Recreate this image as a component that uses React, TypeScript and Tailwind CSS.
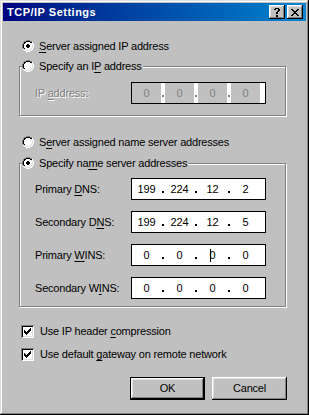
import React from "react";

const FONT = "font-['Liberation_Sans',Arial,sans-serif]";

type PixProps = { map: string[]; palette: Record<string, string> };

// tiny pixel-art icon renderer for the classic 3D glyphs
function Pix({ map, palette }: PixProps) {
  const w = map[0].length;
  const h = map.length;
  return (
    <svg width={w} height={h} viewBox={`0 0 ${w} ${h}`} shapeRendering="crispEdges" className="block shrink-0">
      {map.flatMap((row, y) =>
        row.split("").map((c, x) =>
          palette[c] ? <rect key={`${x}-${y}`} x={x} y={y} width={1} height={1} fill={palette[c]} /> : null
        )
      )}
    </svg>
  );
}

const PAL = { G: "#808080", K: "#000000", W: "#ffffff", L: "#dfdfdf", w: "#ffffff", k: "#000000" };

const RADIO_OFF = [
  "....GGGG....",
  "..GGKKKKGG..",
  ".GKKwwwwKKW.",
  ".GKwwwwwwLW.",
  "GKwwwwwwwwLW",
  "GKwwwwwwwwLW",
  "GKwwwwwwwwLW",
  "GKwwwwwwwwLW",
  ".GKwwwwwwLW.",
  ".WLLwwwwLLW.",
  "..WWLLLLWW..",
  "....WWWW....",
];

const RADIO_ON = [
  "....GGGG....",
  "..GGKKKKGG..",
  ".GKKwwwwKKW.",
  ".GKwwwwwwLW.",
  "GKwwwkkwwwLW",
  "GKwwkkkkwwLW",
  "GKwwkkkkwwLW",
  "GKwwwkkwwwLW",
  ".GKwwwwwwLW.",
  ".WLLwwwwLLW.",
  "..WWLLLLWW..",
  "....WWWW....",
];

const CHECK = [
  "......k",
  ".....kk",
  "k...kkk",
  "kk.kkk.",
  "kkkkk..",
  ".kkk...",
  "..k....",
];

const HELP = [
  ".kkkk.",
  "kk..kk",
  "....kk",
  "...kk.",
  "..kk..",
  "..kk..",
  "......",
  "..kk..",
  "..kk..",
];

const CLOSE = [
  "kk....kk",
  ".kk..kk.",
  "..kkkk..",
  "...kk...",
  "..kkkk..",
  ".kk..kk.",
  "kk....kk",
];

const RAISED =
  "shadow-[inset_-1px_-1px_#000,inset_1px_1px_#fff,inset_-2px_-2px_#808080,inset_2px_2px_#dfdfdf]";

function U({ children }: { children: React.ReactNode }) {
  return <span className="underline underline-offset-[2px] decoration-[1px]">{children}</span>;
}

function Radio({ on, children }: { on?: boolean; children: React.ReactNode }) {
  return (
    <div className="flex items-center h-[14px] gap-[5px]">
      <Pix map={on ? RADIO_ON : RADIO_OFF} palette={PAL} />
      <span className="leading-[14px] whitespace-nowrap">{children}</span>
    </div>
  );
}

function Check({ children }: { children: React.ReactNode }) {
  return (
    <div className="flex items-center h-[13px] gap-[6px] ml-[2px]">
      <div className="w-[13px] h-[13px] bg-white flex items-center justify-center shadow-[inset_1px_1px_#808080,inset_-1px_-1px_#fff,inset_2px_2px_#000,inset_-2px_-2px_#dfdfdf]">
        <Pix map={CHECK} palette={PAL} />
      </div>
      <span className="leading-[13px] whitespace-nowrap">{children}</span>
    </div>
  );
}

function IpField({ parts, disabled, cursor }: { parts: string[]; disabled?: boolean; cursor?: number }) {
  return (
    <div className="w-[135px] h-[22px] border border-black bg-white flex">
      {parts.map((p, i) => (
        <div key={i} className="flex h-full">
          <div
            className={`w-[29px] h-full flex items-center justify-center ${
              disabled ? "bg-[#c0c0c0] text-[#808080]" : "text-black"
            }`}
          >
            {cursor === i && <span className="inline-block w-[1px] h-[13px] bg-black -mr-[1px] relative z-10" />}
            <span>{p}</span>
          </div>
          {i < 3 && (
            <div className="w-[4px] h-full flex items-end justify-center pb-[6px]">
              <div className={`w-[2px] h-[2px] ${disabled ? "bg-[#808080]" : "bg-black"}`} />
            </div>
          )}
        </div>
      ))}
    </div>
  );
}

function TitleButton({ map }: { map: string[] }) {
  return (
    <div className={`w-[16px] h-[14px] bg-[#c0c0c0] flex items-center justify-center ${RAISED}`}>
      <Pix map={map} palette={PAL} />
    </div>
  );
}

const GROUP = "m-0 p-0 min-w-0 w-[267px] border border-[#808080] shadow-[inset_1px_1px_#fff,1px_1px_#fff]";

export default function App() {
  return (
    <div
      className={`w-[309px] h-[415px] bg-[#c0c0c0] p-[3px] flex flex-col text-[11px] tracking-[-0.2px] text-black ${FONT} shadow-[inset_-1px_-1px_#000,inset_1px_1px_#dfdfdf,inset_-2px_-2px_#808080,inset_2px_2px_#fff]`}
    >
      <div className="h-[18px] flex items-center bg-linear-to-r from-[#000080] to-[#1084d0] pl-[4px] pr-[3px]">
        <span className="text-white font-bold tracking-[0.5px] leading-[18px]">TCP/IP Settings</span>
        <div className="ml-auto flex gap-[2px]">
          <TitleButton map={HELP} />
          <TitleButton map={CLOSE} />
        </div>
      </div>

      <div className="flex flex-col pl-[16px] pr-[19px]">
        <div className="mt-[18px] ml-[3px]">
          <Radio on>
            <U>S</U>erver assigned IP address
          </Radio>
        </div>

        <fieldset className={`mt-[6px] ${GROUP}`}>
          <legend className="ml-[2px] pr-[1px] p-0 bg-[#c0c0c0]">
            <Radio>
              Specify an I<U>P</U> address
            </Radio>
          </legend>
          <div className="flex items-center pl-[15px] mt-[9px] mb-[11px]">
            <span className="w-[96px] text-[#808080] [text-shadow:1px_1px_0_#fff]">
              IP <U>a</U>ddress:
            </span>
            <IpField parts={["0", "0", "0", "0"]} disabled />
          </div>
        </fieldset>

        <div className="mt-[19px] ml-[3px]">
          <Radio>
            S<U>e</U>rver assigned name server addresses
          </Radio>
        </div>

        <fieldset className={`mt-[7px] ${GROUP}`}>
          <legend className="ml-[2px] pr-[1px] p-0 bg-[#c0c0c0]">
            <Radio on>
              Specify na<U>m</U>e server addresses
            </Radio>
          </legend>
          <div className="flex flex-col gap-[11px] pl-[15px] mt-[8px] mb-[7px]">
            <div className="flex items-center">
              <span className="w-[96px]">
                Primary <U>D</U>NS:
              </span>
              <IpField parts={["199", "224", "12", "2"]} />
            </div>
            <div className="flex items-center">
              <span className="w-[96px]">
                Secondary D<U>N</U>S:
              </span>
              <IpField parts={["199", "224", "12", "5"]} />
            </div>
            <div className="flex items-center">
              <span className="w-[96px]">
                Primary <U>W</U>INS:
              </span>
              <IpField parts={["0", "0", "0", "0"]} cursor={2} />
            </div>
            <div className="flex items-center">
              <span className="w-[96px]">
                Secondary W<U>I</U>NS:
              </span>
              <IpField parts={["0", "0", "0", "0"]} />
            </div>
          </div>
        </fieldset>

        <div className="mt-[18px]">
          <Check>
            Use IP header <U>c</U>ompression
          </Check>
        </div>
        <div className="mt-[10px]">
          <Check>
            Use default <U>g</U>ateway on remote network
          </Check>
        </div>

        <div className="mt-[16px] flex justify-end gap-[7px]">
          <div className="w-[75px] h-[23px] border border-black">
            <div className={`w-full h-full flex items-center justify-center ${RAISED}`}>OK</div>
          </div>
          <div className={`w-[75px] h-[23px] flex items-center justify-center ${RAISED}`}>Cancel</div>
        </div>
      </div>
    </div>
  );
}
